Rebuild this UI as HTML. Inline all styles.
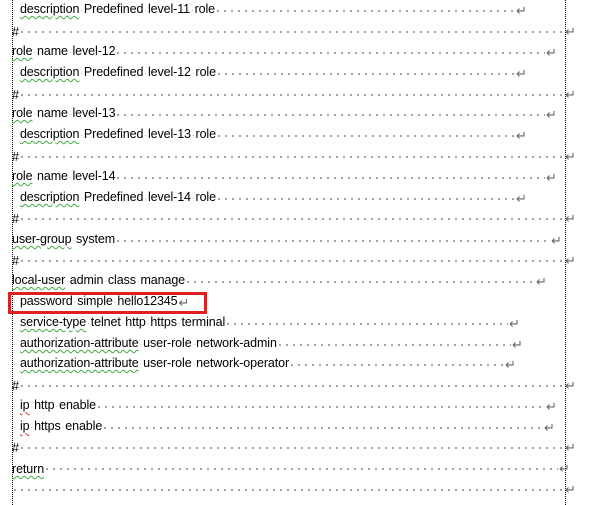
<!DOCTYPE html>
<html><head><meta charset="utf-8"><style>
body{margin:0;width:598px;height:505px;background:#fff;position:relative;overflow:hidden;font-family:"Liberation Sans",sans-serif;font-size:12.5px;color:#000}
.vl{position:absolute;top:0;height:505px;border-left:1px dotted #000}
.r{position:absolute;left:12px;height:16px;display:flex;align-items:flex-end;white-space:pre;line-height:14px}
.r .t{letter-spacing:-0.1px}
.r .ld{flex:1;height:2px;margin:0 0 6px 2px;background:linear-gradient(90deg,#98a6b2 0 2px,transparent 2px);background-size:7px 2px}
.ret{color:#666;font-size:13px;width:11px;margin-left:1px;line-height:14px}
.d{color:#999;font-size:8px;padding:0 1px}
.g{text-decoration:underline wavy #4a4;text-decoration-thickness:1px;text-underline-offset:2px}
.rd{text-decoration:underline wavy #d33;text-decoration-thickness:1px;text-underline-offset:2px}
.box{position:absolute;left:8px;top:292px;width:193px;height:16px;border:3px solid #e0201f}
</style></head><body>
<div class="vl" style="left:12px"></div>
<div class="vl" style="left:565px"></div>
<div class="r" style="top:2px;width:515px"><span class="t"><span class="d">·</span> <span class="g">description</span><span class="d">·</span>Predefined<span class="d">·</span>level-11<span class="d">·</span>role</span><span class="ld"></span><span class="ret">↵</span></div>
<div class="r" style="top:23px;width:564px"><span class="t">#</span><span class="ld"></span><span class="ret">↵</span></div>
<div class="r" style="top:44px;width:545px"><span class="t"><span class="g">role</span><span class="d">·</span>name<span class="d">·</span>level-12</span><span class="ld"></span><span class="ret">↵</span></div>
<div class="r" style="top:65px;width:515px"><span class="t"><span class="d">·</span> <span class="g">description</span><span class="d">·</span>Predefined<span class="d">·</span>level-12<span class="d">·</span>role</span><span class="ld"></span><span class="ret">↵</span></div>
<div class="r" style="top:86px;width:564px"><span class="t">#</span><span class="ld"></span><span class="ret">↵</span></div>
<div class="r" style="top:106px;width:545px"><span class="t"><span class="g">role</span><span class="d">·</span>name<span class="d">·</span>level-13</span><span class="ld"></span><span class="ret">↵</span></div>
<div class="r" style="top:127px;width:515px"><span class="t"><span class="d">·</span> <span class="g">description</span><span class="d">·</span>Predefined<span class="d">·</span>level-13<span class="d">·</span>role</span><span class="ld"></span><span class="ret">↵</span></div>
<div class="r" style="top:148px;width:564px"><span class="t">#</span><span class="ld"></span><span class="ret">↵</span></div>
<div class="r" style="top:169px;width:545px"><span class="t"><span class="g">role</span><span class="d">·</span>name<span class="d">·</span>level-14</span><span class="ld"></span><span class="ret">↵</span></div>
<div class="r" style="top:190px;width:515px"><span class="t"><span class="d">·</span> <span class="g">description</span><span class="d">·</span>Predefined<span class="d">·</span>level-14<span class="d">·</span>role</span><span class="ld"></span><span class="ret">↵</span></div>
<div class="r" style="top:210px;width:564px"><span class="t">#</span><span class="ld"></span><span class="ret">↵</span></div>
<div class="r" style="top:232px;width:550px"><span class="t"><span class="g">user-group</span><span class="d">·</span>system</span><span class="ld"></span><span class="ret">↵</span></div>
<div class="r" style="top:252px;width:564px"><span class="t">#</span><span class="ld"></span><span class="ret">↵</span></div>
<div class="r" style="top:273px;width:535px"><span class="t"><span class="g">local-user</span><span class="d">·</span>admin<span class="d">·</span>class<span class="d">·</span>manage</span><span class="ld"></span><span class="ret">↵</span></div>
<div class="r" style="top:294px;width:195px"><span class="t"><span class="d">·</span> password<span class="d">·</span>simple<span class="d">·</span>hello12345</span><span class="ret">↵</span></div>
<div class="r" style="top:315px;width:508px"><span class="t"><span class="d">·</span> <span class="g">service-type</span><span class="d">·</span>telnet<span class="d">·</span>http<span class="d">·</span>https<span class="d">·</span>terminal</span><span class="ld"></span><span class="ret">↵</span></div>
<div class="r" style="top:336px;width:511px"><span class="t"><span class="d">·</span> <span class="g">authorization-attribute</span><span class="d">·</span>user-role<span class="d">·</span>network-admin</span><span class="ld"></span><span class="ret">↵</span></div>
<div class="r" style="top:356px;width:504px"><span class="t"><span class="d">·</span> <span class="g">authorization-attribute</span><span class="d">·</span>user-role<span class="d">·</span>network-operator</span><span class="ld"></span><span class="ret">↵</span></div>
<div class="r" style="top:377px;width:564px"><span class="t">#</span><span class="ld"></span><span class="ret">↵</span></div>
<div class="r" style="top:398px;width:545px"><span class="t"><span class="d">·</span> <span class="rd">ip</span><span class="d">·</span>http<span class="d">·</span>enable</span><span class="ld"></span><span class="ret">↵</span></div>
<div class="r" style="top:419px;width:543px"><span class="t"><span class="d">·</span> <span class="rd">ip</span><span class="d">·</span>https<span class="d">·</span>enable</span><span class="ld"></span><span class="ret">↵</span></div>
<div class="r" style="top:439px;width:564px"><span class="t">#</span><span class="ld"></span><span class="ret">↵</span></div>
<div class="r" style="top:460px;width:558px"><span class="t"><span class="g">return</span></span><span class="ld"></span><span class="ret">↵</span></div>
<div class="r" style="top:481px;width:564px"><span class="ld"></span><span class="ret">↵</span></div>
<div class="box"></div>
</body></html>
